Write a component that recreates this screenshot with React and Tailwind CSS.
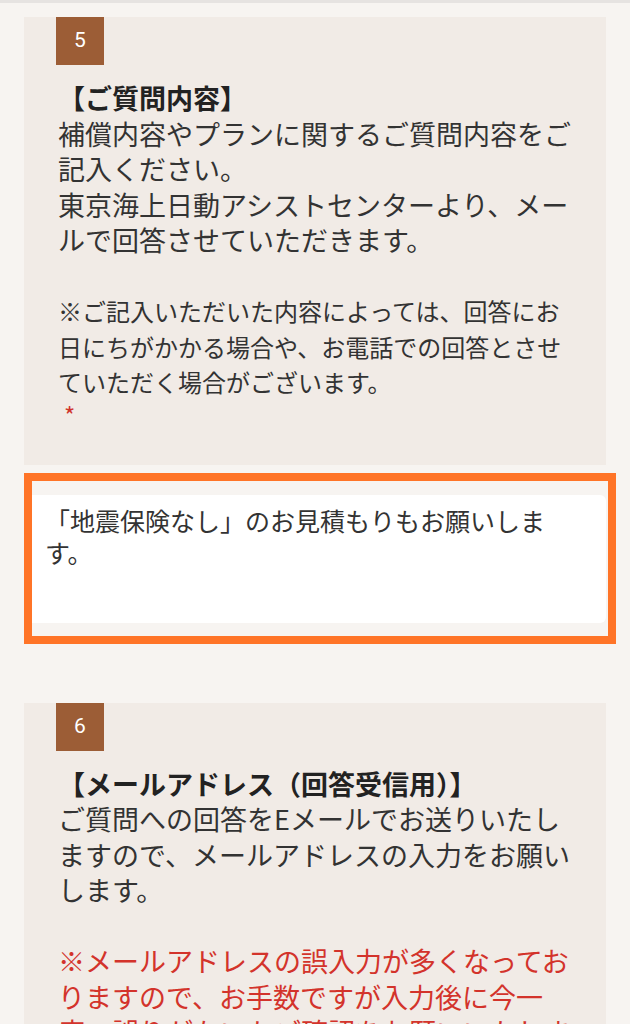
import React from 'react';

const jp = { fontFamily: '"Noto Sans CJK JP", "Noto Sans", sans-serif' };

function Badge({ num }) {
  return (
    <div className="ml-[32px] w-[48px] h-[48px] bg-[#9c5d36] flex items-center justify-center text-white text-[21px] font-['Roboto',sans-serif]">
      {num}
    </div>
  );
}

export default function App() {
  return (
    <div className="min-h-screen bg-[#f7f4f1] overflow-hidden" style={jp}>
      <div className="h-[3px] bg-[#e6e3e1]" />

      {/* 5 ご質問内容 */}
      <div className="mt-[14px] mx-[24px] bg-[#f1ebe6] pb-[35px]">
        <Badge num="5" />
        <div className="mt-[15px] pl-[34px] text-[27px] leading-[35.5px] text-[#333] whitespace-nowrap">
          <div className="font-bold text-[#222]">【ご質問内容】</div>
          <div>補償内容やプランに関するご質問内容をご</div>
          <div>記入ください。</div>
          <div>東京海上日動アシストセンターより、メー</div>
          <div>ルで回答させていただきます。</div>
          <div className="h-[35.5px]" />
          <div className="text-[24px]">
            <div>※ご記入いただいた内容によっては、回答にお</div>
            <div>日にちがかかる場合や、お電話での回答とさせ</div>
            <div>ていただく場合がございます。</div>
          </div>
          <div className="pl-[6px] text-[24px] leading-[30px] text-[#d0342c]">*</div>
        </div>
      </div>

      {/* 入力欄 */}
      <div className="relative mt-[30px] mx-[24px]">
        <div className="h-[128px] bg-white rounded-[6px] pl-[21px] pt-[9px] text-[25px] leading-[32px] text-[#333] whitespace-nowrap">
          <div>「地震保険なし」のお見積もりもお願いしま</div>
          <div>す。</div>
        </div>
        <div className="absolute top-[-22px] bottom-[-21px] left-0 right-[-10px] border-[8px] border-[#ff7427] pointer-events-none" />
      </div>

      {/* 6 メールアドレス */}
      <div className="mt-[80px] mx-[24px] bg-[#f1ebe6] pb-[40px]">
        <Badge num="6" />
        <div className="mt-[15px] pl-[34px] text-[27px] leading-[35.5px] text-[#333] whitespace-nowrap">
          <div className="font-bold text-[#222]">【メールアドレス（回答受信用）】</div>
          <div>ご質問への回答をEメールでお送りいたし</div>
          <div>ますので、メールアドレスの入力をお願い</div>
          <div>します。</div>
          <div className="h-[35.5px]" />
          <div className="text-[#d3332b]">
            <div>※メールアドレスの誤入力が多くなってお</div>
            <div>りますので、お手数ですが入力後に今一</div>
            <div>度、誤りがないかご確認をお願いいたしま</div>
            <div>す。</div>
          </div>
        </div>
      </div>
    </div>
  );
}
